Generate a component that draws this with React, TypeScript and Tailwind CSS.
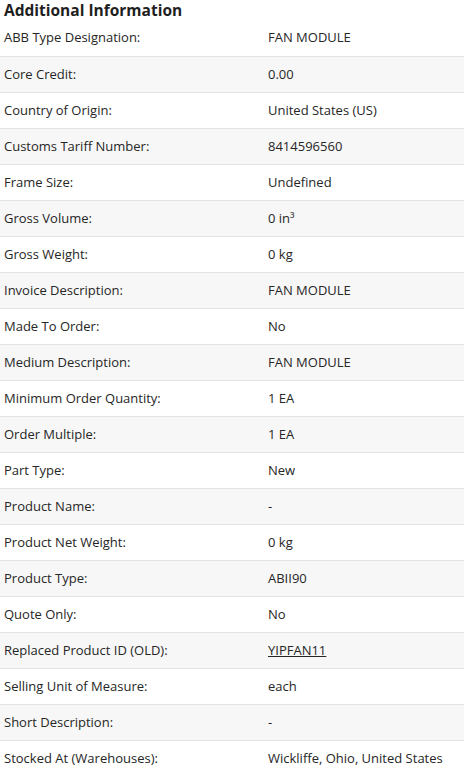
const rows: [string, string, boolean?][] = [
  ['ABB Type Designation:', 'FAN MODULE'],
  ['Core Credit:', '0.00'],
  ['Country of Origin:', 'United States (US)'],
  ['Customs Tariff Number:', '8414596560'],
  ['Frame Size:', 'Undefined'],
  ['Gross Volume:', '0 in³'],
  ['Gross Weight:', '0 kg'],
  ['Invoice Description:', 'FAN MODULE'],
  ['Made To Order:', 'No'],
  ['Medium Description:', 'FAN MODULE'],
  ['Minimum Order Quantity:', '1 EA'],
  ['Order Multiple:', '1 EA'],
  ['Part Type:', 'New'],
  ['Product Name:', '-'],
  ['Product Net Weight:', '0 kg'],
  ['Product Type:', 'ABII90'],
  ['Quote Only:', 'No'],
  ['Replaced Product ID (OLD):', 'YIPFAN11', true],
  ['Selling Unit of Measure:', 'each'],
  ['Short Description:', '-'],
  ['Stocked At (Warehouses):', 'Wickliffe, Ohio, United States'],
];

const App = () => {
  return (
    <div className="w-[464px] bg-white font-['Open_Sans',sans-serif] text-[#262626]">
      <h2 className="h-5 px-1 text-[15.5px] font-bold leading-5 text-[#1f1f1f]">
        Additional Information
      </h2>
      <div className="flex flex-col">
        {rows.map(([label, value, link], idx) => (
          <div
            key={label}
            className={`flex h-9 items-center text-[13px] ${idx > 0 ? 'border-t border-[#e3e3e3]' : ''} ${idx % 2 === 1 ? 'bg-[#f7f7f7]' : ''}`}
          >
            <div className="w-[268px] pl-1">{label}</div>
            <div className={link ? 'underline' : ''}>{value}</div>
          </div>
        ))}
      </div>
    </div>
  );
};

export default App;
